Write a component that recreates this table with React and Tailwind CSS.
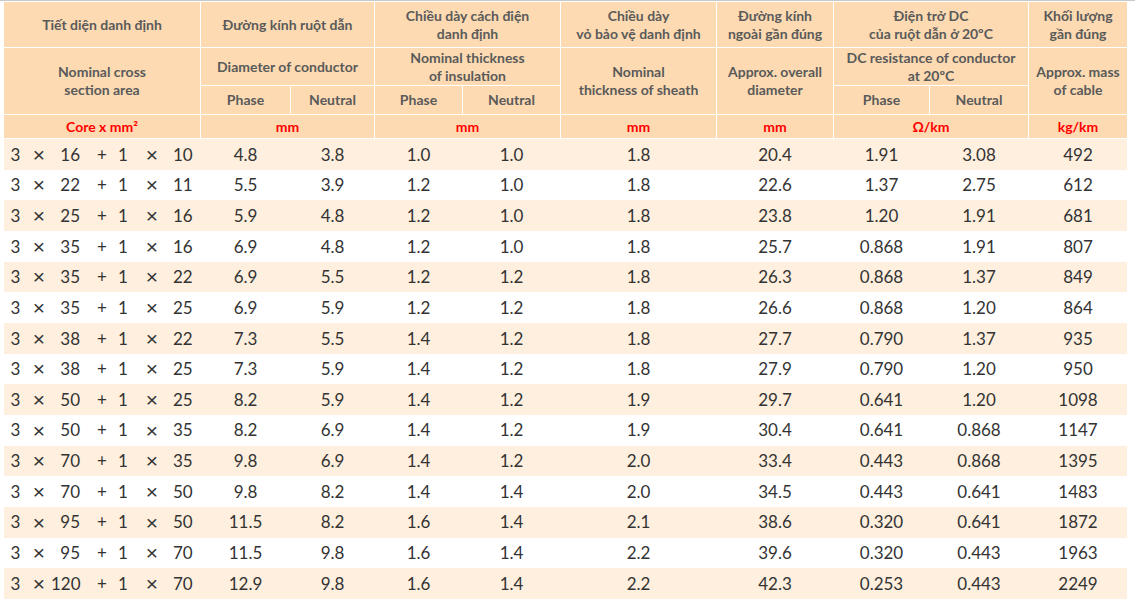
import React from "react";

const rows = [
  ["16", "10", "4.8", "3.8", "1.0", "1.0", "1.8", "20.4", "1.91", "3.08", "492"],
  ["22", "11", "5.5", "3.9", "1.2", "1.0", "1.8", "22.6", "1.37", "2.75", "612"],
  ["25", "16", "5.9", "4.8", "1.2", "1.0", "1.8", "23.8", "1.20", "1.91", "681"],
  ["35", "16", "6.9", "4.8", "1.2", "1.0", "1.8", "25.7", "0.868", "1.91", "807"],
  ["35", "22", "6.9", "5.5", "1.2", "1.2", "1.8", "26.3", "0.868", "1.37", "849"],
  ["35", "25", "6.9", "5.9", "1.2", "1.2", "1.8", "26.6", "0.868", "1.20", "864"],
  ["38", "22", "7.3", "5.5", "1.4", "1.2", "1.8", "27.7", "0.790", "1.37", "935"],
  ["38", "25", "7.3", "5.9", "1.4", "1.2", "1.8", "27.9", "0.790", "1.20", "950"],
  ["50", "25", "8.2", "5.9", "1.4", "1.2", "1.9", "29.7", "0.641", "1.20", "1098"],
  ["50", "35", "8.2", "6.9", "1.4", "1.2", "1.9", "30.4", "0.641", "0.868", "1147"],
  ["70", "35", "9.8", "6.9", "1.4", "1.2", "2.0", "33.4", "0.443", "0.868", "1395"],
  ["70", "50", "9.8", "8.2", "1.4", "1.4", "2.0", "34.5", "0.443", "0.641", "1483"],
  ["95", "50", "11.5", "8.2", "1.6", "1.4", "2.1", "38.6", "0.320", "0.641", "1872"],
  ["95", "70", "11.5", "9.8", "1.6", "1.4", "2.2", "39.6", "0.320", "0.443", "1963"],
  ["120", "70", "12.9", "9.8", "1.6", "1.4", "2.2", "42.3", "0.253", "0.443", "2249"],
];

const cols =
  "grid-cols-[196px_89px_83px_87px_97px_155px_116px_95px_98px_98px]";

const hd =
  "flex items-center justify-center text-center bg-[#fddab2] text-[#5a5a5a] font-bold text-[14px] leading-[18px]";
const unit =
  "flex items-center justify-center bg-[#fddab2] text-[#ff0000] font-bold text-[14px]";

// the multiplication sign needs a bigger glyph than Lato's
const times = "text-center font-['Liberation_Sans'] text-[21px] leading-none";

const Size = ({ a, b }) => (
  <div className="flex items-center">
    <span className="w-[23px] text-center">3</span>
    <span className={`w-[24px] ${times}`}>×</span>
    <span className="w-[29px] text-right">{a}</span>
    <span className="w-[11px]" />
    <span className="w-[22px] text-center">+</span>
    <span className="w-[20px] text-center">1</span>
    <span className={`w-[38px] ${times}`}>×</span>
    <span className="pl-[2px]">{b}</span>
  </div>
);

export default function App() {
  return (
    <div
      className="w-[1135px] h-[599px] overflow-hidden bg-white"
      style={{ fontFamily: "Lato, 'Open Sans', sans-serif" }}
    >
      <div className="h-px bg-[#c9c9c9]" />
      {/* header */}
      <div
        className={`mt-px ml-[4px] w-[1123px] grid ${cols} grid-rows-[45px_37px_28px_23px] gap-px bg-white border-b border-white`}
      >
        <div className={`${hd} col-start-1 row-start-1`}>Tiết diện danh định</div>
        <div className={`${hd} col-start-2 col-span-2 row-start-1`}>Đường kính ruột dẫn</div>
        <div className={`${hd} col-start-4 col-span-2 row-start-1`}>
          Chiều dày cách điện
          <br />
          danh định
        </div>
        <div className={`${hd} col-start-6 row-start-1`}>
          Chiều dày
          <br />
          vỏ bảo vệ danh định
        </div>
        <div className={`${hd} col-start-7 row-start-1`}>
          Đường kính
          <br />
          ngoài gần đúng
        </div>
        <div className={`${hd} col-start-8 col-span-2 row-start-1`}>
          Điện trở DC
          <br />
          của ruột dẫn ở 20ºC
        </div>
        <div className={`${hd} col-start-10 row-start-1`}>
          Khối lượng
          <br />
          gần đúng
        </div>

        <div className={`${hd} col-start-1 row-start-2 row-span-2`}>
          Nominal cross
          <br />
          section area
        </div>
        <div className={`${hd} col-start-2 col-span-2 row-start-2`}>Diameter of conductor</div>
        <div className={`${hd} col-start-4 col-span-2 row-start-2`}>
          Nominal thickness
          <br />
          of insulation
        </div>
        <div className={`${hd} col-start-6 row-start-2 row-span-2`}>
          Nominal
          <br />
          thickness of sheath
        </div>
        <div className={`${hd} col-start-7 row-start-2 row-span-2`}>
          Approx. overall
          <br />
          diameter
        </div>
        <div className={`${hd} col-start-8 col-span-2 row-start-2`}>
          DC resistance of conductor
          <br />
          at 20ºC
        </div>
        <div className={`${hd} col-start-10 row-start-2 row-span-2`}>
          Approx. mass
          <br />
          of cable
        </div>

        <div className={`${hd} col-start-2 row-start-3`}>Phase</div>
        <div className={`${hd} col-start-3 row-start-3`}>Neutral</div>
        <div className={`${hd} col-start-4 row-start-3`}>Phase</div>
        <div className={`${hd} col-start-5 row-start-3`}>Neutral</div>
        <div className={`${hd} col-start-8 row-start-3`}>Phase</div>
        <div className={`${hd} col-start-9 row-start-3`}>Neutral</div>

        <div className={`${unit} col-start-1 row-start-4`}>Core x mm²</div>
        <div className={`${unit} col-start-2 col-span-2 row-start-4`}>mm</div>
        <div className={`${unit} col-start-4 col-span-2 row-start-4`}>mm</div>
        <div className={`${unit} col-start-6 row-start-4`}>mm</div>
        <div className={`${unit} col-start-7 row-start-4`}>mm</div>
        <div className={`${unit} col-start-8 col-span-2 row-start-4`}>Ω/km</div>
        <div className={`${unit} col-start-10 row-start-4`}>kg/km</div>
      </div>

      {/* data rows */}
      <div className="ml-[4px] w-[1123px] text-[17px] text-[#333333]">
        {rows.map((r, i) => (
          <div
            key={i}
            className={`grid ${cols} gap-x-px h-[30.67px] items-center ${
              i % 2 === 0 ? "bg-[#feefde]" : "bg-white"
            }`}
          >
            <Size a={r[0]} b={r[1]} />
            {r.slice(2).map((v, j) => (
              <div key={j} className="text-center">
                {v}
              </div>
            ))}
          </div>
        ))}
      </div>
    </div>
  );
}
